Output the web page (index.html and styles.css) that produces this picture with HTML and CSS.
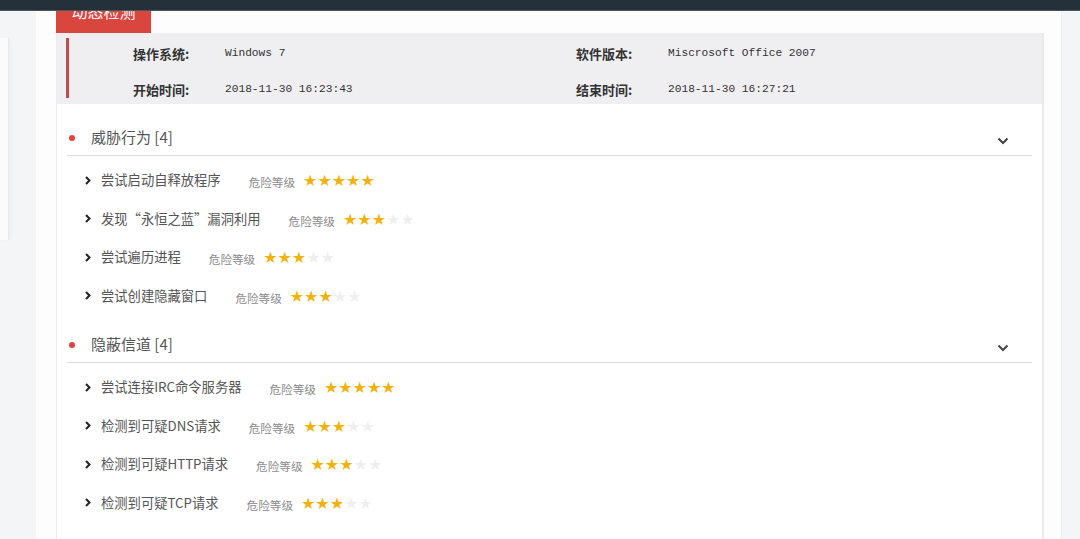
FILE: index.html
```html
<!DOCTYPE html>
<html lang="zh-CN">
<head>
<meta charset="UTF-8" />
<meta name="viewport" content="width=device-width, initial-scale=1" />
<title>动态检测</title>
<link rel="stylesheet" href="styles.css">
</head>
<body>
  <div class="topbar"></div>
  <div class="page">
    <aside class="side"><div class="side-panel"></div></aside>
    <main class="main">
      <div class="tab">动态检测</div>
      <div class="card">
        <div class="info">
          <div class="info-grid">
            <span class="k">操作系统:</span><span class="v">Windows 7</span>
            <span class="k">软件版本:</span><span class="v">Miscrosoft Office 2007</span>
            <span class="k">开始时间:</span><span class="v">2018-11-30 16:23:43</span>
            <span class="k">结束时间:</span><span class="v">2018-11-30 16:27:21</span>
          </div>
        </div>

        <div class="content">
          <section class="group">
            <div class="group-head">
              <span class="dot"></span>
              <span class="title">威胁行为 [4]</span>
              <svg class="caret" width="12" height="8" viewBox="0 0 12 8"><polyline points="1.5,1.5 6,6 10.5,1.5" /></svg>
            </div>
            <ul class="items">
              <li><svg class="arrow" width="6" height="9" viewBox="0 0 6 9"><polyline points="1,1 4.5,4.5 1,8" /></svg><span class="name">尝试启动自释放程序</span><span class="lvl">危险等级</span><span class="stars"><b>★★★★★</b></span></li>
              <li><svg class="arrow" width="6" height="9" viewBox="0 0 6 9"><polyline points="1,1 4.5,4.5 1,8" /></svg><span class="name">发现“永恒之蓝”漏洞利用</span><span class="lvl">危险等级</span><span class="stars"><b>★★★</b>★★</span></li>
              <li><svg class="arrow" width="6" height="9" viewBox="0 0 6 9"><polyline points="1,1 4.5,4.5 1,8" /></svg><span class="name">尝试遍历进程</span><span class="lvl">危险等级</span><span class="stars"><b>★★★</b>★★</span></li>
              <li><svg class="arrow" width="6" height="9" viewBox="0 0 6 9"><polyline points="1,1 4.5,4.5 1,8" /></svg><span class="name">尝试创建隐藏窗口</span><span class="lvl">危险等级</span><span class="stars"><b>★★★</b>★★</span></li>
            </ul>
          </section>

          <section class="group">
            <div class="group-head">
              <span class="dot"></span>
              <span class="title">隐蔽信道 [4]</span>
              <svg class="caret" width="12" height="8" viewBox="0 0 12 8"><polyline points="1.5,1.5 6,6 10.5,1.5" /></svg>
            </div>
            <ul class="items">
              <li><svg class="arrow" width="6" height="9" viewBox="0 0 6 9"><polyline points="1,1 4.5,4.5 1,8" /></svg><span class="name">尝试连接IRC命令服务器</span><span class="lvl">危险等级</span><span class="stars"><b>★★★★★</b></span></li>
              <li><svg class="arrow" width="6" height="9" viewBox="0 0 6 9"><polyline points="1,1 4.5,4.5 1,8" /></svg><span class="name">检测到可疑DNS请求</span><span class="lvl">危险等级</span><span class="stars"><b>★★★</b>★★</span></li>
              <li><svg class="arrow" width="6" height="9" viewBox="0 0 6 9"><polyline points="1,1 4.5,4.5 1,8" /></svg><span class="name">检测到可疑HTTP请求</span><span class="lvl">危险等级</span><span class="stars"><b>★★★</b>★★</span></li>
              <li><svg class="arrow" width="6" height="9" viewBox="0 0 6 9"><polyline points="1,1 4.5,4.5 1,8" /></svg><span class="name">检测到可疑TCP请求</span><span class="lvl">危险等级</span><span class="stars"><b>★★★</b>★★</span></li>
            </ul>
          </section>
        </div>
      </div>
    </main>
    <div class="gutter"></div>
  </div>
</body>
</html>
```

FILE: styles.css
```css
body {
  margin: 0;
  background: #f4f5f7;
  font-family: "Noto Sans CJK SC", "Noto Sans", sans-serif;
  color: #555;
}
.topbar {
  position: fixed;
  top: 0; left: 0; right: 0;
  height: 10px;
  background: #25313a;
  border-bottom: 1px solid #4a555d;
  z-index: 10;
}
.page {
  display: flex;
  min-height: 539px;
}
.side {
  width: 36px;
  flex: none;
  padding-top: 38px;
}
.side-panel {
  width: 8px;
  height: 202px;
  background: #fbfbfc;
  border-right: 1px solid #e6e8ea;
  box-shadow: 2px 0 4px rgba(0,0,0,0.03);
}
.main {
  flex: 1;
  background: #fdfdfd;
  padding: 0 17px 0 20px;
}
.gutter {
  width: 18px;
  flex: none;
  border-left: 1px solid #eceef0;
}
.tab {
  display: inline-block;
  width: 95px;
  height: 33px;
  box-sizing: border-box;
  padding-top: 1px;
  line-height: 20px;
  text-align: center;
  font-size: 16px;
  color: #fff;
  background: #d9463e;
  vertical-align: top;
}
.card {
  border-left: 1px solid #ececec;
  border-right: 2px solid #e9e9e9;
  background: #fff;
  min-height: 506px;
}
.info {
  position: relative;
  background: #efeff1;
  height: 71px;
  padding: 2px 0 0 76px;
  box-sizing: border-box;
}
.info::before {
  content: "";
  position: absolute;
  left: 9px; top: 5px;
  width: 3px; height: 60px;
  background: #c24a4a;
}
.info-grid {
  display: grid;
  grid-template-columns: 92px 351px 92px auto;
  grid-auto-rows: 36px;
  align-items: center;
}
.k {
  font-size: 13px;
  font-weight: bold;
  color: #333;
}
.v {
  font-family: "Liberation Mono", monospace;
  font-size: 11.2px;
  color: #333;
}
.content {
  padding: 16px 10px 20px 10px;
}
.group + .group {
  margin-top: 12px;
}
.group-head {
  display: flex;
  align-items: center;
  height: 35px;
  border-bottom: 1px solid #dcdcdc;
}
.dot {
  width: 6px; height: 6px;
  border-radius: 50%;
  background: #e2403c;
  margin: 0 16px 0 2px;
}
.title {
  font-size: 15px;
  line-height: 20px;
  color: #555;
  flex: 1;
  margin-top: -2px;
}
.caret {
  margin: 6px 23px 0 0;
}
.caret polyline, .arrow polyline {
  fill: none;
  stroke: #444;
  stroke-width: 2;
}
.arrow polyline { stroke: #222; }
.items {
  list-style: none;
  margin: 0;
  padding: 5px 0 0 0;
}
.items li {
  display: flex;
  align-items: center;
  height: 38.5px;
  padding-left: 18px;
}
.arrow {
  margin-right: 10px;
}
.name {
  font-size: 13.3px;
  line-height: 18px;
  color: #555;
}
.lvl {
  font-size: 11.6px;
  color: #8a8a8a;
  margin: 4px 0 0 28px;
}
.stars {
  margin: 2px 0 0 8px;
  font-family: "DejaVu Sans", sans-serif;
  font-size: 16px;
  line-height: 18px;
  color: #efefef;
}
.stars b {
  font-weight: normal;
  color: #f2b20c;
}
```
